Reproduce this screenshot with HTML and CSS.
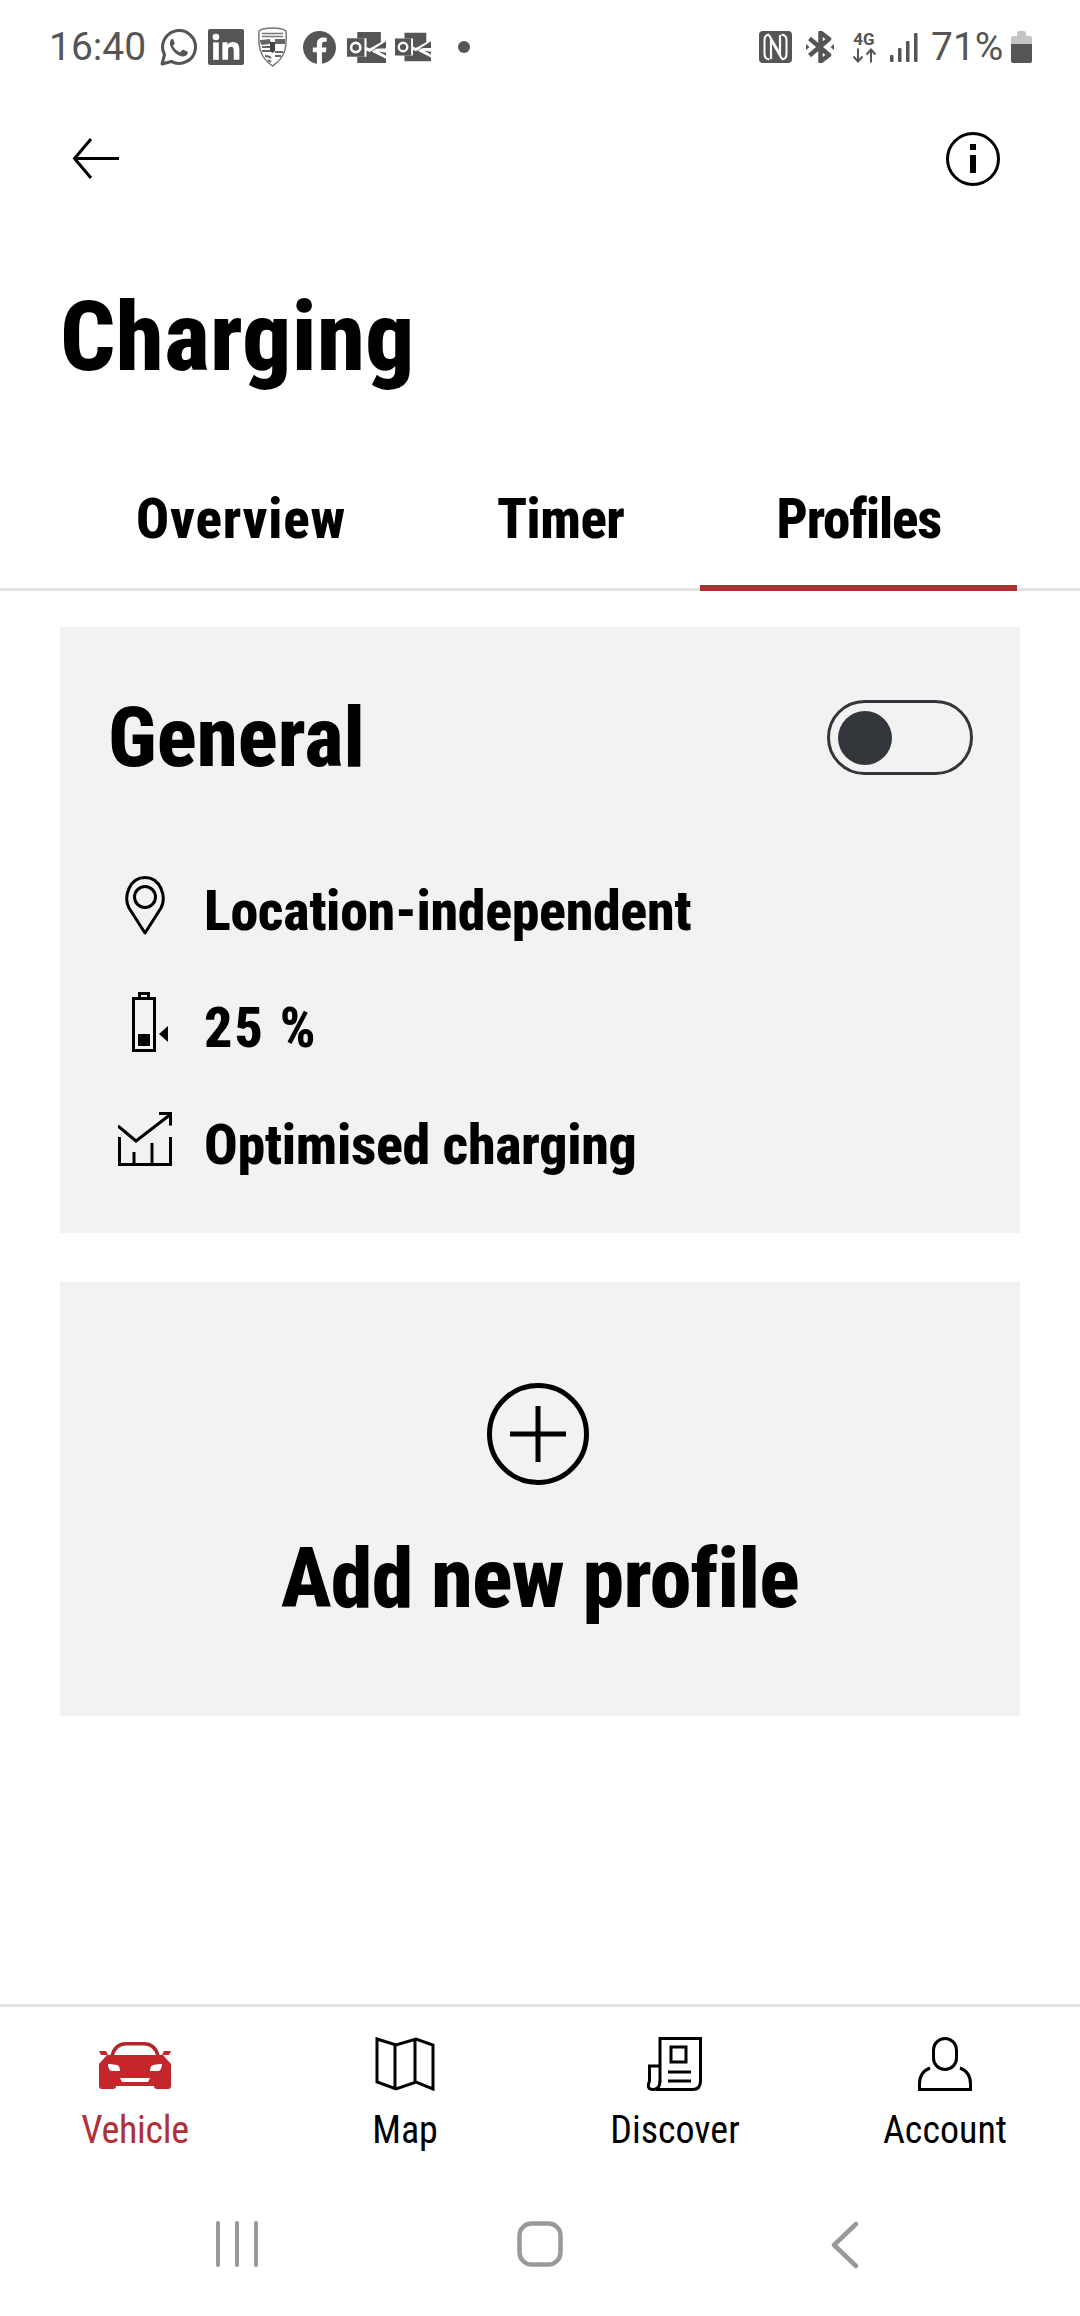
FILE: index.html
```html
<!DOCTYPE html>
<html lang="en">
<head>
<meta charset="utf-8">
<title>Charging</title>
<link rel="stylesheet" href="styles.css">
</head>
<body>
<div class="page">
  <div class="status">
    <span class="clock">16:40</span>
    <svg class="si wa" viewBox="0 0 36 36"><path d="M2 34l2.400-9A16 16 0 1 1 11 31.600z" fill="none" stroke="#555" stroke-width="3" stroke-linejoin="round"/><path d="M12 9.500c-2 1-3 3.500-2 6.500 1.500 4.500 5.500 9 10.500 10.500 3 .8 5.500-.5 6.500-3 .2-.8 0-1.200-.6-1.500l-3.600-1.800c-.6-.3-1 0-1.400.5l-1.200 1.500c-.4.400-.8.400-1.300.2-2.500-1-4.600-3-6-5.300-.2-.5-.2-.8.200-1.200l1-1.200c.3-.4.300-.8.100-1.200l-1.500-3.500c-.3-.7-.7-.9-1.300-.7z" fill="#555"/></svg>
    <svg class="si li" viewBox="0 0 35 35"><rect width="35" height="35" rx="2" fill="#555"/><rect x="5" y="13" width="5.500" height="17" fill="#fff"/><circle cx="7.700" cy="7.800" r="3.200" fill="#fff"/><path d="M14 13h5v2.400c1-1.700 3-2.800 5.300-2.800 4.500 0 6.200 2.700 6.200 7.400V30H25v-9c0-2.400-.8-3.800-2.700-3.800S19.500 18.800 19.500 21v9H14z" fill="#fff"/></svg>
    <svg class="si cr" viewBox="0 0 29 40"><path d="M1 4C6 0 23 0 28 4c.8 14 .5 26-13.500 35C1 30 .2 18 1 4z" fill="#fff" stroke="#777" stroke-width="1.500"/><path d="M4 6.500h21M4 9.500h21" stroke="#777" stroke-width="1.500"/><path d="M3 14l8-1 1 3-8 1zM18 13h8v3h-8zM4 20h8M4 24h9M7 29c2 0 5 1 6 2M17 25h8M17 29h6M10 33l3 2" stroke="#666" stroke-width="2" fill="#666"/><path d="M12 15h5v9l-2.500 2-2.500-2z" fill="#444"/></svg>
    <svg class="si fb" viewBox="0 0 32 32"><path d="M32 16a16 16 0 1 0-18.500 15.800V20.600H9.500V16h4v-3.500c0-4 2.400-6.200 6-6.200 1.700 0 3.500.3 3.500.3v3.900h-2c-2 0-2.600 1.200-2.600 2.500v3h4.400l-.7 4.600h-3.700v11.200A16 16 0 0 0 32 16z" fill="#555"/></svg>
    <svg class="si ol" viewBox="0 0 38 30"><path d="M10 0h23v10L22 16l-3-1.500V6h-9zM10 24h9v-6l3 1.500 11-6.500v1L24 19l14 7v4H10z" fill="#555"/><path d="M38 9v7l-11 0zM38 23v-3l-7-1z" fill="#555"/><rect y="6" width="17" height="18" fill="#555"/><circle cx="8.500" cy="15" r="4.500" fill="none" stroke="#fff" stroke-width="2.500"/></svg>
    <svg class="si ol2" viewBox="0 0 38 30"><path d="M10 0h23v10L22 16l-3-1.500V6h-9zM10 24h9v-6l3 1.500 11-6.500v1L24 19l14 7v4H10z" fill="#555"/><path d="M38 9v7l-11 0zM38 23v-3l-7-1z" fill="#555"/><rect y="6" width="17" height="18" fill="#555"/><circle cx="8.500" cy="15" r="4.500" fill="none" stroke="#fff" stroke-width="2.500"/></svg>
    <span class="dot"></span>
    <span class="spacer"></span>
    <svg class="si nfc" viewBox="0 0 33 32"><rect width="33" height="32" rx="4" fill="#555"/><path d="M10 3.500Q5.500 4 5.500 9v14q0 5 5 5.500M23 28.500q4.500-.5 4.500-5.500V9q0-5-5-5.500" fill="none" stroke="#fff" stroke-width="2"/><path d="M10 4l11 19V4M23 28L12 9v19" fill="none" stroke="#fff" stroke-width="2.200"/></svg>
    <svg class="si bt" viewBox="0 0 28 32"><path d="M3.500 7.500L23 24l-8.500 6.500V1.500L23 8 3.500 24.500" fill="none" stroke="#555" stroke-width="4.500" stroke-linejoin="round"/><path d="M0 13v6l3.500-3zM28 13v6l-3.500-3z" fill="#555"/></svg>
    <span class="net"><span class="net-label">4G</span><svg class="net-arrows" viewBox="0 0 25 14"><path d="M6 0v12M1.500 8L6 13l4.500-5M19 14V2M14.500 6L19 1l4.500 5" fill="none" stroke="#555" stroke-width="2"/></svg></span>
    <svg class="si sig" viewBox="0 0 28 29"><rect y="22" width="3.500" height="7" rx="1" fill="#555"/><rect x="8" y="15" width="3.500" height="14" rx="1" fill="#555"/><rect x="16" y="8" width="3.500" height="21" rx="1" fill="#555"/><rect x="24" y="0" width="3.500" height="29" rx="1" fill="#555"/></svg>
    <span class="pct">71%</span>
    <svg class="si bat" viewBox="0 0 21 32"><path d="M0 13V7q0-2 2-2h4V2q0-2 2-2h5q2 0 2 2v3h4q2 0 2 2v6z" fill="#c4c4c4"/><path d="M0 13h21v17q0 2-2 2H2q-2 0-2-2z" fill="#555"/></svg>
  </div>

  <div class="appbar">
    <svg class="ic-back" viewBox="0 0 48 42"><path d="M47 20.500H2M19 1L2.500 20.500 19 40" fill="none" stroke="#000" stroke-width="3"/></svg>
    <svg class="ic-info" viewBox="0 0 54 54"><circle cx="27" cy="27" r="25.500" fill="none" stroke="#000" stroke-width="3"/><rect x="24" y="12" width="6" height="6" fill="#000"/><rect x="24" y="23" width="6" height="18" fill="#000"/></svg>
  </div>

  <h1 class="title">Charging</h1>

  <nav class="tabs">
    <a class="tab tab-overview">Overview</a>
    <a class="tab tab-timer">Timer</a>
    <a class="tab tab-active">Profiles</a>
  </nav>

  <main class="content">
    <section class="card card-general">
      <div class="card-head">
        <h2 class="card-title">General</h2>
        <span class="toggle"><span class="knob"></span></span>
      </div>
      <ul class="rows">
        <li class="row">
          <span class="row-ic"><svg class="ic-pin" viewBox="0 0 42 59"><path d="M21 57L5 32C-1 20 6 1.500 21 1.500S43 20 37 32z" fill="none" stroke="#000" stroke-width="3" stroke-linejoin="round"/><circle cx="21" cy="21" r="10.500" fill="none" stroke="#000" stroke-width="3"/></svg></span>
          <span class="row-text">Location-independent</span>
        </li>
        <li class="row">
          <span class="row-ic"><svg class="ic-bat" viewBox="0 0 36 60"><path d="M1.500 6.500h21v52h-21zM7.500 6.500V1.500h9v5" fill="none" stroke="#000" stroke-width="3"/><rect x="6" y="42" width="12" height="12" fill="#000"/><path d="M36 34v16l-9-8z" fill="#000"/></svg></span>
          <span class="row-text row-pct">25 %</span>
        </li>
        <li class="row">
          <span class="row-ic"><svg class="ic-chart" viewBox="0 0 54 54"><path d="M0 14l18 15L53 2" fill="none" stroke="#000" stroke-width="3"/><path d="M41 1.500h11.500v12" fill="none" stroke="#000" stroke-width="3"/><path d="M1.500 25v27.500h51V25M16 40v13M34 31v22" fill="none" stroke="#000" stroke-width="3"/></svg></span>
          <span class="row-text">Optimised charging</span>
        </li>
      </ul>
    </section>

    <section class="card card-add">
      <svg class="ic-plus" viewBox="0 0 102 102"><circle cx="51" cy="51" r="48.500" fill="none" stroke="#000" stroke-width="5"/><path d="M51 23v56M23 51h56" stroke="#000" stroke-width="5"/></svg>
      <h2 class="add-title">Add new profile</h2>
    </section>
  </main>

  <nav class="bottom">
    <a class="bitem bitem-active">
      <svg class="bi bi-car" viewBox="0 0 72 47"><path d="M13 14C15 6 20 1.800 27 1.800h18C52 1.800 57 6 59 14" fill="none" stroke="#b3272b" stroke-width="3.500"/><path d="M0 9h7l2 4H2zM72 9h-7l-2 4h7z" fill="#c4272b"/><path fill-rule="evenodd" d="M8 13h56l8 9v22q0 3-3 3H58q-3 0-3-3H17q0 3-3 3H3q-3 0-3-3V22zM9 22q0 5 3 7h9q0-5-3-6-5-1-9-1zM63 22q0 5-3 7h-9q0-5 3-6 5-1 9-1zM21 36l2 4h26l2-4z" fill="#c4272b"/></svg>
      <span class="blabel blabel-veh">Vehicle</span>
    </a>
    <a class="bitem">
      <svg class="bi" viewBox="0 0 60 54"><path d="M2 2l19 6 20-6 17 6v44l-17-7-20 7-19-7zM20 8v44M40 2v43" fill="none" stroke="#000" stroke-width="3"/></svg>
      <span class="blabel">Map</span>
    </a>
    <a class="bitem">
      <svg class="bi" viewBox="0 0 54 54"><path d="M12 45V1.500h40.500V44q0 8.500-8 8.500H8" fill="none" stroke="#000" stroke-width="3"/><path d="M12 44q0 8.500-7 8.500T1.500 44V29H12" fill="none" stroke="#000" stroke-width="3"/><rect x="23" y="10" width="15" height="15" fill="none" stroke="#000" stroke-width="3"/><path d="M20 35h23M20 44h23" stroke="#000" stroke-width="3"/></svg>
      <span class="blabel">Discover</span>
    </a>
    <a class="bitem">
      <svg class="bi" viewBox="0 0 54 54"><rect x="15.500" y="1.500" width="23" height="31" rx="11.500" fill="none" stroke="#000" stroke-width="3"/><path d="M12 31Q1.500 35 1.500 47v5.500h51V47Q52.500 35 42 31" fill="none" stroke="#000" stroke-width="3"/></svg>
      <span class="blabel">Account</span>
    </a>
  </nav>

  <div class="sysnav">
    <svg class="sys-recent" viewBox="0 0 44 46"><path d="M3 2v42M22 2v42M41 2v42" stroke="#999" stroke-width="4" stroke-linecap="round"/></svg>
    <svg class="sys-home" viewBox="0 0 46 46"><rect x="2.500" y="2.500" width="41" height="41" rx="12" fill="none" stroke="#999" stroke-width="4.500"/></svg>
    <svg class="sys-back" viewBox="0 0 28 48"><path d="M25 3L3 24l22 21" fill="none" stroke="#999" stroke-width="4.500" stroke-linecap="round" stroke-linejoin="round"/></svg>
  </div>
</div>
</body>
</html>
```
FILE: styles.css
```css
* { box-sizing: border-box; }
html, body { margin: 0; padding: 0; background: #fff; }
body { font-family: Roboto, "Liberation Sans", sans-serif; color: #000; font-stretch: 75%; }
.page { width: 1080px; height: 2316px; display: flex; flex-direction: column; overflow: hidden; }

.status { height: 94px; flex: none; display: flex; align-items: center; padding: 0 48px 0 49px; color: #555; font-stretch: 100%; }
.clock { font-size: 39px; width: 96px; line-height: 1; white-space: nowrap; }
.si { display: block; flex: none; }
.wa { width: 37px; height: 37px; margin-left: 15px; }
.li { width: 36px; height: 36px; margin-left: 11px; }
.cr { width: 29px; height: 40px; margin-left: 14px; }
.fb { width: 33px; height: 33px; margin-left: 16px; }
.ol { width: 39px; height: 31px; margin-left: 11px; }
.ol2 { width: 36px; height: 30px; margin-left: 9px; }
.dot { width: 12px; height: 12px; border-radius: 50%; background: #555; margin-left: 27px; flex: none; }
.spacer { flex: 1; }
.nfc { width: 33px; height: 32px; }
.bt { width: 28px; height: 32px; margin-left: 14px; }
.net { width: 26px; margin-left: 17px; display: flex; flex-direction: column; align-items: center; flex: none; }
.net-label { font-size: 17px; line-height: 17px; font-weight: 700; }
.net-arrows { width: 25px; height: 15px; display: block; }
.sig { width: 28px; height: 29px; margin-left: 13px; }
.pct { font-size: 39px; line-height: 1; width: 72px; margin-left: 13px; white-space: nowrap; }
.bat { width: 21px; height: 32px; margin-left: 8px; }

.appbar { height: 130px; flex: none; display: flex; justify-content: space-between; align-items: center; padding: 0 80px 0 72px; }
.ic-back { width: 48px; height: 42px; display: block; }
.ic-info { width: 54px; height: 54px; display: block; }

.title { margin: 0; padding-left: 60px; height: 226px; font-size: 97px; line-height: 226px; font-weight: 800; flex: none; letter-spacing: .4px; }

.tabs { flex: none; box-sizing: content-box; height: 99px; padding: 39px 0 0 60px; display: flex; border-bottom: 3px solid #e3e3e3; }
.tab { padding: 0 76px; height: 99px; font-size: 55px; font-weight: 800; line-height: 60px; position: relative; white-space: nowrap; }
.tab-overview { letter-spacing: .8px; padding-right: 75px; }
.tab-timer { letter-spacing: -.5px; }
.tab-active { letter-spacing: -1.2px; }
.tab-active::after { content: ""; position: absolute; left: 0; right: 0; bottom: -3px; height: 6px; background: #ab3232; }

.content { flex: 1; padding: 36px 60px 0; display: flex; flex-direction: column; gap: 49px; }
.card { background: #f2f2f2; }
.card-general { height: 606px; padding: 73px 47px 0 48px; }
.card-head { display: flex; justify-content: space-between; align-items: center; height: 75px; }
.card-title { margin: 0; font-size: 83px; line-height: 75px; font-weight: 800; }
.toggle { width: 146px; height: 75px; border: 3px solid #32363b; border-radius: 38px; padding: 8px; display: block; }
.knob { display: block; width: 54px; height: 54px; border-radius: 50%; background: #32363b; }
.rows { list-style: none; margin: 101px 0 0 -23px; padding: 0; display: flex; flex-direction: column; gap: 47px; }
.row { display: flex; align-items: center; height: 70px; }
.row-ic { width: 119px; display: flex; justify-content: center; flex: none; margin-bottom: 12px; }
.row-text { font-size: 56px; font-weight: 800; line-height: 70px; white-space: nowrap; letter-spacing: -.35px; }
.row-pct { letter-spacing: 2px; }
.ic-pin { width: 42px; height: 59px; display: block; }
.ic-bat { width: 36px; height: 60px; display: block; margin-left: 11px; }
.ic-chart { width: 54px; height: 54px; display: block; }

.card-add { height: 434px; display: flex; flex-direction: column; align-items: center; padding-top: 101px; }
.ic-plus { width: 102px; height: 102px; display: block; margin-left: -4px; }
.add-title { margin: 54px 0 0; font-size: 84px; line-height: 80px; font-weight: 800; white-space: nowrap; letter-spacing: -.7px; }

.bottom { flex: none; height: 215px; border-top: 3px solid #e3e3e3; display: grid; grid-template-columns: repeat(4, 270px); padding-top: 30px; }
.bitem { display: flex; flex-direction: column; align-items: center; color: #000; }
.bitem-active { color: #b03035; }
.bi { height: 54px; width: 70px; display: block; margin-bottom: -1px; }
.bi-car { width: 72px; height: 47px; margin-top: 5px; margin-bottom: 1px; }
.blabel { font-size: 38px; line-height: 50px; margin-top: 15px; white-space: nowrap; font-weight: 450; }
.blabel-veh { letter-spacing: -.3px; }

.sysnav { flex: none; height: 97px; display: flex; align-items: flex-start; padding: 2px 0 0 215px; }
.sys-recent { width: 44px; height: 46px; display: block; }
.sys-home { width: 46px; height: 46px; display: block; margin-left: 258px; }
.sys-back { width: 28px; height: 48px; display: block; margin-left: 268px; }
```
